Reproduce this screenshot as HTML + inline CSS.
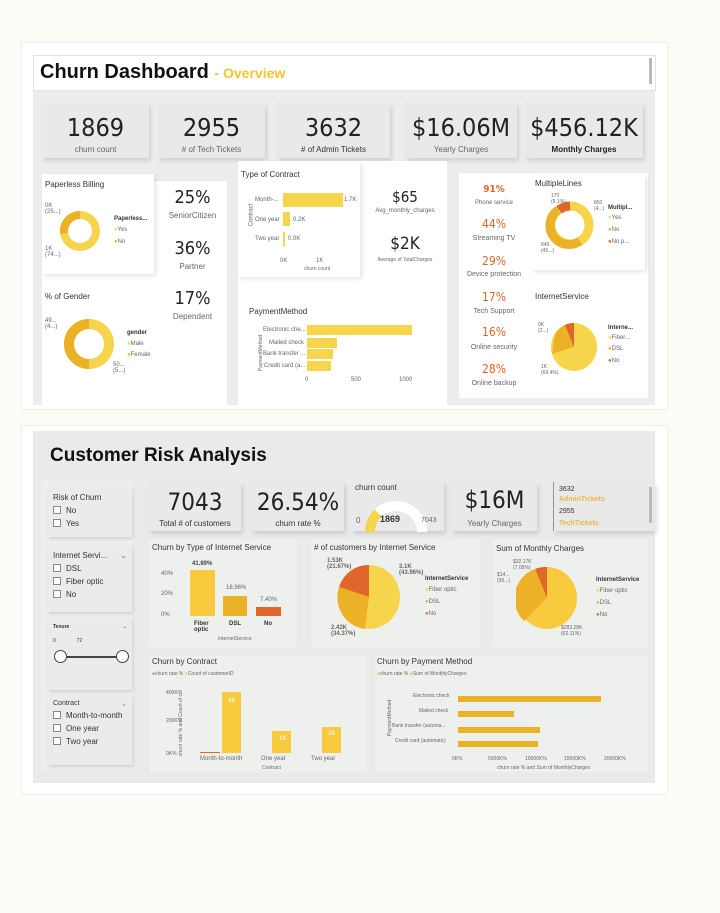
<!DOCTYPE html>
<html><head><meta charset="utf-8"><style>
*{margin:0;padding:0;box-sizing:border-box}
body{width:720px;height:913px;background:#fcfbf6;font-family:"Liberation Sans",sans-serif;position:relative;overflow:hidden;color:#333}
.a{position:absolute}
.card{position:absolute;background:#e9e8ea;box-shadow:2px 3px 4px rgba(0,0,0,.12)}
.big{position:absolute;left:0;right:0;text-align:center;font-family:"DejaVu Sans Condensed","Liberation Sans Narrow",sans-serif;color:#222}
.lbl{position:absolute;left:0;right:0;text-align:center;font-size:8px;color:#666}
.w{position:absolute;background:#fff}
.t{position:absolute;font-size:8px;color:#333}
.s{font-size:6px;color:#666;position:absolute}
.o{color:#e0662c}
.cb{display:inline-block;width:8px;height:8px;border:1px solid #888;margin-right:5px;vertical-align:-1px;background:#fff}
.sl{position:absolute;background:#eceaeb;box-shadow:1px 2px 3px rgba(0,0,0,.12);font-size:8px;color:#333}
.sl div{margin-top:4px}
.g{position:absolute;background:#eef0ee}
</style></head><body>
<!-- TOP -->
<div class="a" style="left:21px;top:42px;width:647px;height:368px;background:#fff;border:1px solid #eee"></div>
<div class="a" style="left:33px;top:55px;width:623px;height:36px;background:#fff;border:1px solid #e2e2e2"></div>
<div class="a" style="left:649px;top:58px;width:3px;height:26px;background:#bbb"></div>
<div class="a" style="left:40px;top:61px;font-size:20px;font-weight:bold;color:#111">Churn Dashboard <span style="font-size:14px;color:#f2c530">- Overview</span></div>
<div class="a" style="left:33px;top:91px;width:622px;height:314px;background:#ededed"></div>

<div class="card" style="left:42px;top:103px;width:107px;height:55px"><div class="big" style="top:10px;font-size:25px">1869</div><div class="lbl" style="top:42px">churn count</div></div>
<div class="card" style="left:158px;top:103px;width:107px;height:55px"><div class="big" style="top:10px;font-size:25px">2955</div><div class="lbl" style="top:42px"># of Tech Tickets</div></div>
<div class="card" style="left:277px;top:103px;width:113px;height:55px"><div class="big" style="top:10px;font-size:25px">3632</div><div class="lbl" style="top:42px;color:#333"># of Admin Tickets</div></div>
<div class="card" style="left:405px;top:103px;width:112px;height:55px"><div class="big" style="top:10px;font-size:25px">$16.06M</div><div class="lbl" style="top:42px">Yearly Charges</div></div>
<div class="card" style="left:525px;top:103px;width:118px;height:55px"><div class="big" style="top:10px;font-size:25px">$456.12K</div><div class="lbl" style="top:42px;font-weight:bold;color:#222">Monthly Charges</div></div>

<!-- left white panel -->
<div class="w" style="left:42px;top:181px;width:185px;height:224px"></div>
<div class="a" style="left:42px;top:174px;width:112px;height:100px;background:#fff;box-shadow:2px 2px 4px rgba(0,0,0,.1)"></div>
<div class="t" style="left:45px;top:180px">Paperless Billing</div>
<svg class="a" style="left:58px;top:209px" width="44" height="44"><circle cx="22" cy="22" r="16" fill="none" stroke="#f6d54d" stroke-width="8"/><path d="M22 6 A16 16 0 0 0 6.2 24.5" fill="none" stroke="#ecb227" stroke-width="8"/></svg>
<div class="s" style="left:45px;top:203px">0K<br>(25...)</div>
<div class="s" style="left:45px;top:246px">1K<br>(74...)</div>
<div class="s" style="left:114px;top:216px;font-weight:bold;color:#333">Paperless...</div>
<div class="s" style="left:114px;top:227px"><span style="color:#f6d54d">●</span>Yes</div>
<div class="s" style="left:114px;top:239px"><span style="color:#ecb227">●</span>No</div>
<div class="big" style="left:160px;right:auto;width:65px;top:187px;font-size:18px">25%</div><div class="lbl" style="left:160px;right:auto;width:65px;top:211px">SeniorCitizen</div>
<div class="big" style="left:160px;right:auto;width:65px;top:238px;font-size:18px">36%</div><div class="lbl" style="left:160px;right:auto;width:65px;top:262px">Partner</div>
<div class="big" style="left:160px;right:auto;width:65px;top:288px;font-size:18px">17%</div><div class="lbl" style="left:160px;right:auto;width:65px;top:312px">Dependent</div>
<div class="t" style="left:45px;top:292px">% of Gender</div>
<svg class="a" style="left:61px;top:316px" width="56" height="56"><circle cx="28" cy="28" r="20" fill="none" stroke="#f6d54d" stroke-width="10"/><path d="M28 8 A20 20 0 0 0 28 48" fill="none" stroke="#ecb227" stroke-width="10"/></svg>
<div class="s" style="left:45px;top:318px">49...<br>(4...)</div>
<div class="s" style="left:113px;top:362px">50...<br>(5...)</div>
<div class="s" style="left:127px;top:330px;font-weight:bold;color:#333">gender</div>
<div class="s" style="left:127px;top:341px"><span style="color:#f6d54d">●</span>Male</div>
<div class="s" style="left:127px;top:352px"><span style="color:#ecb227">●</span>Female</div>

<!-- middle panel -->
<div class="w" style="left:238px;top:161px;width:209px;height:244px"></div>
<div class="a" style="left:238px;top:161px;width:122px;height:116px;box-shadow:2px 2px 4px rgba(0,0,0,.1)"></div>
<div class="t" style="left:241px;top:170px">Type of Contract</div>
<div class="s" style="left:240px;top:212px;transform:rotate(-90deg)">Contract</div>
<div class="s" style="left:255px;top:197px">Month-...</div><div class="a" style="left:283px;top:193px;width:60px;height:14px;background:#f6d54d"></div><div class="s" style="left:344px;top:197px">1.7K</div>
<div class="s" style="left:255px;top:217px">One year</div><div class="a" style="left:283px;top:212px;width:7px;height:14px;background:#f6d54d"></div><div class="s" style="left:293px;top:217px">0.2K</div>
<div class="s" style="left:255px;top:236px">Two year</div><div class="a" style="left:283px;top:232px;width:2px;height:14px;background:#f6d54d"></div><div class="s" style="left:288px;top:236px">0.0K</div>
<div class="s" style="left:280px;top:258px">0K</div><div class="s" style="left:316px;top:258px">1K</div><div class="s" style="left:304px;top:266px;font-size:5px">churn count</div>
<div class="big" style="left:365px;right:auto;width:80px;top:188px;font-size:15px">$65</div><div class="lbl" style="left:365px;right:auto;width:80px;top:208px;font-size:6px">Avg_monthly_charges</div>
<div class="big" style="left:365px;right:auto;width:80px;top:234px;font-size:17px">$2K</div><div class="lbl" style="left:365px;right:auto;width:80px;top:257px;font-size:5px">Average of TotalCharges</div>
<div class="t" style="left:249px;top:307px">PaymentMethod</div>
<div class="s" style="left:243px;top:350px;transform:rotate(-90deg);font-size:5px">PaymentMethod</div>
<div class="s" style="left:263px;top:327px">Electronic che...</div><div class="a" style="left:307px;top:325px;width:105px;height:10px;background:#f6d54d"></div>
<div class="s" style="left:269px;top:340px">Mailed check</div><div class="a" style="left:307px;top:338px;width:30px;height:10px;background:#f6d54d"></div>
<div class="s" style="left:263px;top:351px">Bank transfer ...</div><div class="a" style="left:307px;top:349px;width:26px;height:10px;background:#f6d54d"></div>
<div class="s" style="left:264px;top:363px">Credit card (a...</div><div class="a" style="left:307px;top:361px;width:24px;height:10px;background:#f6d54d"></div>
<div class="s" style="left:305px;top:377px">0</div><div class="s" style="left:351px;top:377px">500</div><div class="s" style="left:399px;top:377px">1000</div>

<!-- right panel -->
<div class="w" style="left:459px;top:173px;width:189px;height:225px"></div>
<div class="a" style="left:532px;top:175px;width:113px;height:95px;box-shadow:2px 2px 4px rgba(0,0,0,.1)"></div>
<div class="big o" style="left:459px;right:auto;width:70px;top:184px;font-size:10px;color:#e0662c;font-weight:bold">91%</div><div class="lbl" style="left:459px;right:auto;width:70px;top:200px;font-size:6px">Phone service</div>
<div class="big" style="left:459px;right:auto;width:70px;top:217px;font-size:12px;color:#e0662c">44%</div><div class="lbl" style="left:459px;right:auto;width:70px;top:235px;font-size:7px">Streaming TV</div>
<div class="big" style="left:459px;right:auto;width:70px;top:254px;font-size:12px;color:#e0662c">29%</div><div class="lbl" style="left:459px;right:auto;width:70px;top:271px;font-size:7px">Device protection</div>
<div class="big" style="left:459px;right:auto;width:70px;top:290px;font-size:12px;color:#e0662c">17%</div><div class="lbl" style="left:459px;right:auto;width:70px;top:308px;font-size:7px">Tech Support</div>
<div class="big" style="left:459px;right:auto;width:70px;top:325px;font-size:12px;color:#e0662c">16%</div><div class="lbl" style="left:459px;right:auto;width:70px;top:344px;font-size:7px">Online security</div>
<div class="big" style="left:459px;right:auto;width:70px;top:362px;font-size:12px;color:#e0662c">28%</div><div class="lbl" style="left:459px;right:auto;width:70px;top:380px;font-size:7px">Online backup</div>
<div class="t" style="left:535px;top:179px">MultipleLines</div>
<svg class="a" style="left:545px;top:200px" width="50" height="50"><circle cx="25" cy="25" r="19" fill="none" stroke="#f6d54d" stroke-width="9"/><path d="M35 41 A19 19 0 0 1 13 10" fill="none" stroke="#ecb227" stroke-width="9"/><path d="M14 10 A19 19 0 0 1 25 6" fill="none" stroke="#e0662c" stroke-width="9"/></svg>
<div class="s" style="left:551px;top:193px;font-size:5px">170<br>(9.1%)</div>
<div class="s" style="left:594px;top:200px;font-size:5px">850<br>(4...)</div>
<div class="s" style="left:541px;top:242px;font-size:5px">849<br>(45...)</div>
<div class="s" style="left:608px;top:205px;font-weight:bold;color:#333">Multipl...</div>
<div class="s" style="left:608px;top:215px"><span style="color:#f6d54d">●</span>Yes</div>
<div class="s" style="left:608px;top:227px"><span style="color:#ecb227">●</span>No</div>
<div class="s" style="left:608px;top:239px"><span style="color:#e0662c">●</span>No p...</div>
<div class="t" style="left:535px;top:292px">InternetService</div>
<svg class="a" style="left:550px;top:322px" width="48" height="50"><ellipse cx="24" cy="25" rx="23" ry="24" fill="#f6d54d"/><path d="M24 25 L24 1 A23 24 0 0 0 5 12 Z" fill="#ecb227"/><path d="M24 25 L5 12 L2 32 Z" fill="#ecb227"/><path d="M24 25 L24 1 A23 24 0 0 0 15 3 Z" fill="#e0662c"/></svg>
<div class="s" style="left:538px;top:322px;font-size:5px">0K<br>(2...)</div>
<div class="s" style="left:541px;top:364px;font-size:5px">1K<br>(69.4%)</div>
<div class="s" style="left:608px;top:325px;font-weight:bold;color:#333">Interne...</div>
<div class="s" style="left:608px;top:335px"><span style="color:#f6d54d">●</span>Fiber...</div>
<div class="s" style="left:608px;top:346px"><span style="color:#ecb227">●</span>DSL</div>
<div class="s" style="left:608px;top:358px"><span style="color:#e0662c">●</span>No</div>

<!-- BOTTOM -->
<div class="a" style="left:21px;top:425px;width:647px;height:370px;background:#fff;border:1px solid #eee"></div>
<div class="a" style="left:33px;top:431px;width:622px;height:352px;background:#e9eae9"></div>
<div class="a" style="left:50px;top:445px;font-size:19px;font-weight:bold;color:#111">Customer Risk Analysis</div>
<div class="a" style="left:41px;top:480px;width:92px;height:290px;background:#efeeef"></div>
<div class="sl" style="left:48px;top:487px;width:84px;height:50px;padding:6px 5px">Risk of Churn<div><span class="cb"></span>No</div><div><span class="cb"></span>Yes</div></div>
<div class="sl" style="left:48px;top:545px;width:84px;height:67px;padding:6px 5px">Internet Servi... <span style="float:right;color:#777">⌄</span><div><span class="cb"></span>DSL</div><div><span class="cb"></span>Fiber optic</div><div><span class="cb"></span>No</div></div>
<div class="sl" style="left:48px;top:618px;width:84px;height:72px;padding:6px 5px;font-size:5px;font-weight:bold">Tenure<span style="float:right;color:#777">⌄</span>
<div style="font-weight:normal;margin-top:8px">0 &nbsp;&nbsp;&nbsp;&nbsp;&nbsp;&nbsp;&nbsp;&nbsp;&nbsp;&nbsp;&nbsp;&nbsp;&nbsp; 72</div></div>
<div class="a" style="left:60px;top:656px;width:62px;height:2px;background:#444"></div>
<div class="a" style="left:54px;top:650px;width:13px;height:13px;border:1.5px solid #444;border-radius:50%;background:#fff"></div>
<div class="a" style="left:116px;top:650px;width:13px;height:13px;border:1.5px solid #444;border-radius:50%;background:#fff"></div>
<div class="sl" style="left:48px;top:695px;width:84px;height:70px;padding:5px 5px;font-size:7px">Contract<span style="float:right;color:#777">⌄</span><div style="font-size:8px"><span class="cb"></span>Month-to-month</div><div style="font-size:8px"><span class="cb"></span>One year</div><div style="font-size:8px"><span class="cb"></span>Two year</div></div>

<div class="card" style="left:149px;top:482px;width:92px;height:49px;background:#e8e9e8"><div class="big" style="top:6px;font-size:24px">7043</div><div class="lbl" style="top:37px;color:#333">Total # of customers</div></div>
<div class="card" style="left:252px;top:482px;width:92px;height:49px;background:#e8e9e8"><div class="big" style="top:6px;font-size:24px">26.54%</div><div class="lbl" style="top:37px;color:#333">churn rate %</div></div>
<div class="card" style="left:352px;top:482px;width:92px;height:49px;background:#e8e9e8"><div class="t" style="left:3px;top:1px;font-size:8px">churn count</div>
<svg class="a" style="left:8px;top:12px" width="80" height="40"><path d="M10 38 A26 26 0 0 1 62 38" fill="none" stroke="#fff" stroke-width="10"/><path d="M10 38 A26 26 0 0 1 18 19" fill="none" stroke="#f6d54d" stroke-width="10"/></svg>
<div class="s" style="left:4px;top:34px;font-size:8px">0</div><div class="a" style="left:28px;top:32px;font-size:9px;font-weight:bold">1869</div><div class="s" style="left:69px;top:35px;font-size:7px">7043</div></div>
<div class="card" style="left:452px;top:482px;width:85px;height:49px;background:#e8e9e8"><div class="big" style="top:4px;font-size:24px">$16M</div><div class="lbl" style="top:37px">Yearly Charges</div></div>
<div class="card" style="left:553px;top:482px;width:102px;height:49px;background:#e8e9e8;border-left:1px solid #999"></div>
<div class="a" style="left:559px;top:485px;font-size:7px;color:#333;line-height:10px">3632<br><b style="color:#eab84a">AdminTickets</b><br><span style="line-height:14px">2955</span><br><b style="color:#eab84a">TechTickets</b></div>
<div class="a" style="left:649px;top:487px;width:3px;height:36px;background:#bbb"></div>

<div class="g" style="left:149px;top:540px;width:148px;height:107px"></div>
<div class="t" style="left:152px;top:543px">Churn by Type of Internet Service</div>
<div class="s" style="left:192px;top:561px;font-weight:bold;color:#444">41.89%</div><div class="a" style="left:190px;top:570px;width:25px;height:46px;background:#f8cb3f"></div>
<div class="s" style="left:226px;top:585px">18.96%</div><div class="a" style="left:223px;top:596px;width:24px;height:20px;background:#ecb227"></div>
<div class="s" style="left:260px;top:597px">7.40%</div><div class="a" style="left:256px;top:607px;width:25px;height:9px;background:#e0662c"></div>
<div class="s" style="left:161px;top:571px">40%</div><div class="s" style="left:161px;top:591px">20%</div><div class="s" style="left:161px;top:612px">0%</div>
<div class="s" style="left:194px;top:621px;font-weight:bold;color:#333">Fiber<br>optic</div><div class="s" style="left:229px;top:621px;font-weight:bold;color:#333">DSL</div><div class="s" style="left:264px;top:621px;font-weight:bold;color:#333">No</div>
<div class="s" style="left:218px;top:636px;font-size:5px">InternetService</div>
<div class="g" style="left:311px;top:540px;width:169px;height:107px"></div>
<div class="t" style="left:314px;top:543px"># of customers by Internet Service</div>
<svg class="a" style="left:337px;top:564px" width="64" height="66"><ellipse cx="32" cy="33" rx="31" ry="32" fill="#f6d54d"/><path d="M32 33 L32 1 A31 32 0 0 0 2 23 Z" fill="#e0662c"/><path d="M32 33 L2 23 A31 32 0 0 0 28 65 Z" fill="#ecb227"/></svg>
<div class="s" style="left:327px;top:558px;font-weight:bold">1.53K<br>(21.67%)</div>
<div class="s" style="left:399px;top:564px;font-weight:bold">3.1K<br>(43.96%)</div>
<div class="s" style="left:331px;top:625px;font-weight:bold">2.42K<br>(34.37%)</div>
<div class="s" style="left:425px;top:576px;font-weight:bold;color:#333">InternetService</div>
<div class="s" style="left:425px;top:587px"><span style="color:#f6d54d">●</span>Fiber optic</div>
<div class="s" style="left:425px;top:599px"><span style="color:#ecb227">●</span>DSL</div>
<div class="s" style="left:425px;top:611px"><span style="color:#e0662c">●</span>No</div>
<div class="g" style="left:493px;top:540px;width:155px;height:107px"></div>
<div class="t" style="left:496px;top:544px">Sum of Monthly Charges</div>
<svg class="a" style="left:516px;top:566px" width="62" height="64"><ellipse cx="31" cy="32" rx="30" ry="31" fill="#f8cb3f"/><path d="M31 32 L31 1 A30 31 0 0 0 19 3 Z" fill="#e0662c"/><path d="M31 32 L19 3 A30 31 0 0 0 8 55 Z" fill="#ecb227"/></svg>
<div class="s" style="left:513px;top:559px;font-size:5px">$32.17K<br>(7.05%)</div>
<div class="s" style="left:497px;top:572px;font-size:5px">$14...<br>(30...)</div>
<div class="s" style="left:561px;top:625px;font-size:5px">$283.28K<br>(62.11%)</div>
<div class="s" style="left:596px;top:577px;font-weight:bold;color:#333">InternetService</div>
<div class="s" style="left:596px;top:588px"><span style="color:#f6d54d">●</span>Fiber optic</div>
<div class="s" style="left:596px;top:600px"><span style="color:#ecb227">●</span>DSL</div>
<div class="s" style="left:596px;top:612px"><span style="color:#e0662c">●</span>No</div>

<div class="g" style="left:149px;top:655px;width:217px;height:117px"></div>
<div class="t" style="left:152px;top:657px">Churn by Contract</div>
<div class="s" style="left:152px;top:671px;font-size:5px"><span style="color:#e0662c">●</span>churn rate % <span style="color:#f6d54d">●</span>Count of customerID</div>
<div class="s" style="left:148px;top:720px;transform:rotate(-90deg);font-size:5px">churn rate % and Count of c...</div>
<div class="s" style="left:166px;top:690px;font-size:5px">400K%</div><div class="s" style="left:166px;top:718px;font-size:5px">200K%</div><div class="s" style="left:166px;top:751px;font-size:5px">0K%</div>
<div class="a" style="left:222px;top:692px;width:19px;height:61px;background:#f8cb3f"></div><div class="s" style="left:228px;top:698px;color:#fff">4K</div>
<div class="a" style="left:272px;top:731px;width:19px;height:22px;background:#f8cb3f"></div><div class="s" style="left:279px;top:736px;color:#fff">1K</div>
<div class="a" style="left:322px;top:727px;width:19px;height:26px;background:#f8cb3f"></div><div class="s" style="left:328px;top:731px;color:#fff">2K</div>
<div class="a" style="left:200px;top:752px;width:20px;height:1px;background:#e0662c"></div>
<div class="s" style="left:200px;top:756px">Month-to-month</div><div class="s" style="left:261px;top:756px">One year</div><div class="s" style="left:311px;top:756px">Two year</div>
<div class="s" style="left:262px;top:765px;font-size:5px">Contract</div>
<div class="g" style="left:375px;top:655px;width:273px;height:117px"></div>
<div class="t" style="left:377px;top:657px">Churn by Payment Method</div>
<div class="s" style="left:377px;top:671px;font-size:5px"><span style="color:#ecb227">●</span>churn rate % <span style="color:#ecb227">●</span>Sum of MonthlyCharges</div>
<div class="s" style="left:372px;top:715px;transform:rotate(-90deg);font-size:5px">PaymentMethod</div>
<div class="s" style="left:413px;top:693px;font-size:5px">Electronic check</div><div class="a" style="left:458px;top:696px;width:143px;height:6px;background:#ecb227"></div>
<div class="s" style="left:419px;top:708px;font-size:5px">Mailed check</div><div class="a" style="left:458px;top:711px;width:56px;height:6px;background:#ecb227"></div>
<div class="s" style="left:392px;top:723px;font-size:5px">Bank transfer (automa...</div><div class="a" style="left:458px;top:727px;width:82px;height:6px;background:#ecb227"></div>
<div class="s" style="left:395px;top:738px;font-size:5px">Credit card (automatic)</div><div class="a" style="left:458px;top:741px;width:80px;height:6px;background:#ecb227"></div>
<div class="s" style="left:452px;top:756px;font-size:5px">0K%</div><div class="s" style="left:488px;top:756px;font-size:5px">5000K%</div><div class="s" style="left:525px;top:756px;font-size:5px">10000K%</div><div class="s" style="left:564px;top:756px;font-size:5px">15000K%</div><div class="s" style="left:604px;top:756px;font-size:5px">20000K%</div>
<div class="s" style="left:497px;top:765px;font-size:5px">churn rate % and Sum of MonthlyCharges</div>
</body></html>
